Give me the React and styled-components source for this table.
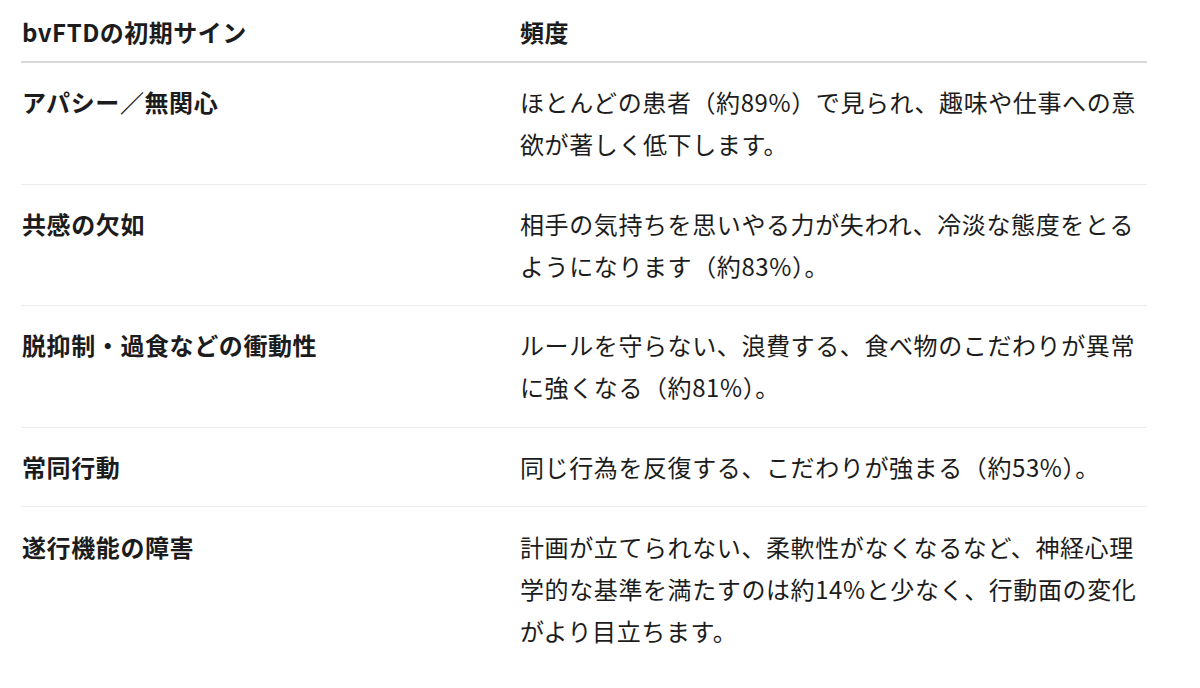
import React from 'react'
import styled, { createGlobalStyle } from 'styled-components'

const GlobalStyle = createGlobalStyle`
  html, body {
    margin: 0;
    padding: 0;
    background: #ffffff;
  }
  body {
    font-family: "Noto Sans CJK JP", "Noto Sans", sans-serif;
    color: #1c1c1c;
  }
`

const Page = styled.div`
  padding: 0 53px 0 21px;
`

const Table = styled.div`
  display: grid;
  grid-template-columns: 498px 1fr;
  width: 1126px;
`

const HeadCell = styled.div`
  font-size: 24px;
  letter-spacing: 0.5px;
  font-weight: 700;
  line-height: 42px;
  padding: 11px 0 8px 1px;
  border-bottom: 2px solid #d8d8d8;
`

const Cell = styled.div`
  font-size: 24px;
  letter-spacing: 0.6px;
  font-weight: ${p => (p.$label ? 700 : 400)};
  line-height: 42px;
  padding: 18.3px 0 18.3px 1px;
  border-bottom: 1px solid ${p => (p.$last ? 'transparent' : '#ededed')};
`

const rows = [
  ['アパシー／無関心', 'ほとんどの患者（約89%）で見られ、趣味や仕事への意欲が著しく低下します。'],
  ['共感の欠如', '相手の気持ちを思いやる力が失われ、冷淡な態度をとるようになります（約83%）。'],
  ['脱抑制・過食などの衝動性', 'ルールを守らない、浪費する、食べ物のこだわりが異常に強くなる（約81%）。'],
  ['常同行動', '同じ行為を反復する、こだわりが強まる（約53%）。'],
  ['遂行機能の障害', '計画が立てられない、柔軟性がなくなるなど、神経心理学的な基準を満たすのは約14%と少なく、行動面の変化がより目立ちます。'],
]

export default function App() {
  return (
    <>
      <GlobalStyle />
      <Page>
        <Table>
          <HeadCell>bvFTDの初期サイン</HeadCell>
          <HeadCell>頻度</HeadCell>
          {rows.map(([sign, freq], i) => (
            <React.Fragment key={sign}>
              <Cell $label $last={i === rows.length - 1}>{sign}</Cell>
              <Cell $last={i === rows.length - 1}>{freq}</Cell>
            </React.Fragment>
          ))}
        </Table>
      </Page>
    </>
  )
}
